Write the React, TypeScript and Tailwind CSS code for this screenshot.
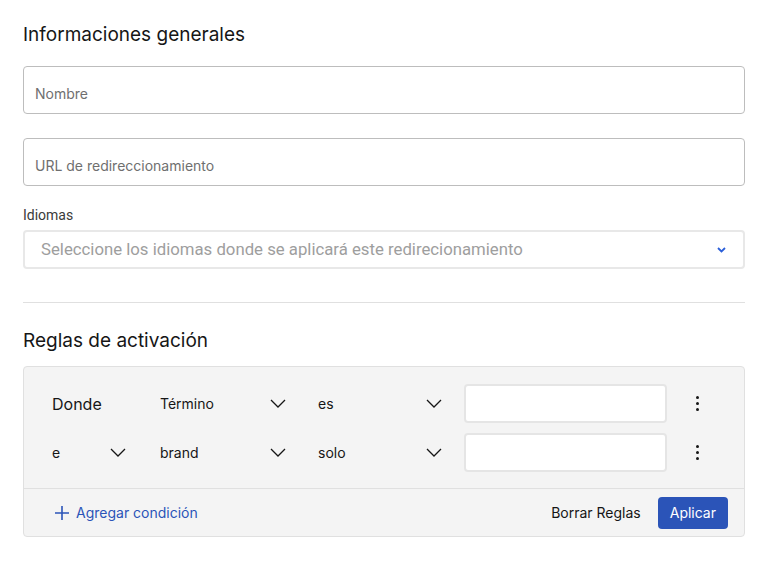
import React from 'react';

const Chevron = () => (
  <svg width="16" height="9" viewBox="0 0 16 9" fill="none">
    <polyline points="1,1 8,8 15,1" stroke="#161616" strokeWidth="1.3" />
  </svg>
);

const Kebab = () => (
  <div className="flex flex-col items-center gap-[3px]">
    <span className="block w-[3px] h-[3px] rounded-full bg-[#161616]" />
    <span className="block w-[3px] h-[3px] rounded-full bg-[#161616]" />
    <span className="block w-[3px] h-[3px] rounded-full bg-[#161616]" />
  </div>
);

const SelectCell = ({ label, width }: { label: string; width: string }) => (
  <div className={`flex items-center justify-between ${width}`}>
    <span className="text-[14px] text-[#161616]">{label}</span>
    <Chevron />
  </div>
);

const App = () => {
  return (
    <div className="min-h-screen bg-white font-['Inter',sans-serif] text-[#161616]">
      <div className="w-[722px] ml-[23px] pt-[22px]">
        {/* Informaciones generales */}
        <h2 className="text-[19px] leading-[26px] font-normal">Informaciones generales</h2>

        <div className="mt-[18px] h-[48px] border border-[#bdbdbd] rounded-[4px] flex items-center px-[11px] pt-[7px]">
          <span className="text-[14px] text-[#6f6f6f]">Nombre</span>
        </div>

        <div className="mt-[24px] h-[48px] border border-[#bdbdbd] rounded-[4px] flex items-center px-[11px] pt-[7px]">
          <span className="text-[14px] text-[#6f6f6f]">URL de redireccionamiento</span>
        </div>

        <div className="mt-[21px] font-['Roboto',sans-serif] text-[14px] leading-[17px] text-[#3a3a3a]">Idiomas</div>
        <div className="mt-[6px] h-[39px] border-2 border-[#e8e8e8] rounded-[4px] flex items-center justify-between pl-[16px] pr-[17px]">
          <span className="font-['Roboto',sans-serif] text-[16.75px] text-[#9e9e9e]">
            Seleccione los idiomas donde se aplicará este redirecionamiento
          </span>
          <svg width="9" height="6" viewBox="0 0 9 6" fill="none">
            <polyline points="1,1 4.5,4.5 8,1" stroke="#2b5fd9" strokeWidth="1.8" />
          </svg>
        </div>

        <div className="mt-[33px] border-t border-[#e0e0e0]" />

        {/* Reglas de activación */}
        <h2 className="mt-[25px] text-[19px] leading-[26px] font-normal">Reglas de activación</h2>

        <div className="mt-[12px] bg-[#f4f4f4] border border-[#e0e0e0] rounded-[4px]">
          <div className="pt-[17px] pb-[16px] pl-[28px] flex flex-col gap-[10px]">
            <div className="flex items-center h-[39px]">
              <div className="w-[108px] text-[16px]">Donde</div>
              <SelectCell label="Término" width="w-[126px]" />
              <div className="w-[32px]" />
              <SelectCell label="es" width="w-[124px]" />
              <div className="w-[22px]" />
              <div className="w-[203px] h-[39px] bg-white border-2 border-[#e5e5e5] rounded-[4px]" />
              <div className="w-[61px] flex justify-center">
                <Kebab />
              </div>
            </div>
            <div className="flex items-center h-[39px]">
              <div className="w-[108px]">
                <SelectCell label="e" width="w-[74px]" />
              </div>
              <SelectCell label="brand" width="w-[126px]" />
              <div className="w-[32px]" />
              <SelectCell label="solo" width="w-[124px]" />
              <div className="w-[22px]" />
              <div className="w-[203px] h-[39px] bg-white border-2 border-[#e5e5e5] rounded-[4px]" />
              <div className="w-[61px] flex justify-center">
                <Kebab />
              </div>
            </div>
          </div>

          <div className="border-t border-[#e0e0e0] h-[48px] flex items-center justify-between pl-[30px] pr-[16px]">
            <button className="flex items-center gap-[6px] text-[#2b54b8] text-[14px]">
              <svg width="16" height="16" viewBox="0 0 16 16" fill="none">
                <path d="M8 1v14M1 8h14" stroke="#2b54b8" strokeWidth="1.6" />
              </svg>
              Agregar condición
            </button>
            <div className="flex items-center gap-[17px]">
              <button className="text-[14px] text-[#161616]">Borrar Reglas</button>
              <button className="h-[32px] px-[12px] bg-[#2b54b8] text-white text-[14px] rounded-[4px]">
                Aplicar
              </button>
            </div>
          </div>
        </div>
      </div>
    </div>
  );
};

export default App;
